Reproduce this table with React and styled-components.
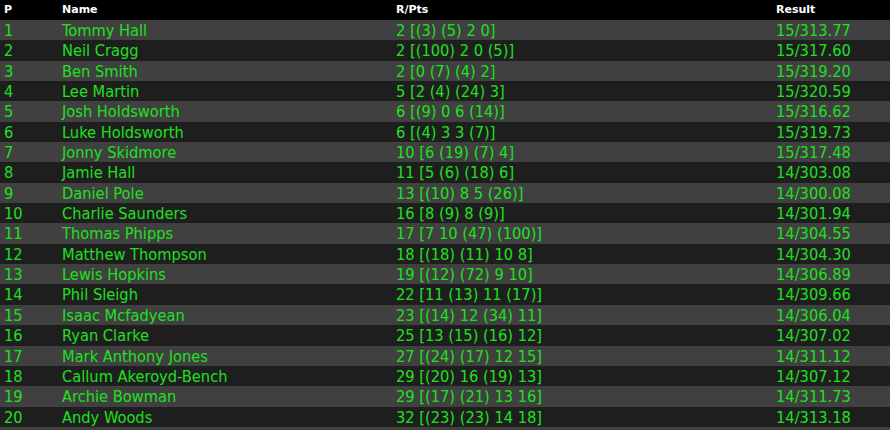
import React from "react";
import styled, { createGlobalStyle } from "styled-components";

const GlobalStyle = createGlobalStyle`
    body {
        margin: 0;
        background: #ffffff;
    }
`;

const Table = styled.div`
    width: 890px;
    display: grid;
    grid-template-columns: 58px 334px 380px 1fr;
    grid-auto-rows: 20.35px;
    grid-template-rows: 20px;
`;

const Row = styled.div`
    display: contents;
`;

const HeadCell = styled.div`
    background-color: #000000;
    color: #ffffff;
    font-family: "DejaVu Sans", sans-serif;
    font-weight: bold;
    font-size: 11px;
    line-height: 20px;
    padding-left: 4px;
    white-space: nowrap;
`;

const Cell = styled.div`
    background-color: ${(props) => (props.odd ? "#404040" : "#1e1e1e")};
    color: #1ee01e;
    font-family: "DejaVu Sans Condensed", "DejaVu Sans", sans-serif;
    font-size: 16.3px;
    line-height: 20.35px;
    padding: 1px 0 0 4px;
    box-sizing: border-box;
    white-space: nowrap;
    overflow: hidden;
`;

const results = [
    ["1", "Tommy Hall", "2 [(3) (5) 2 0]", "15/313.77"],
    ["2", "Neil Cragg", "2 [(100) 2 0 (5)]", "15/317.60"],
    ["3", "Ben Smith", "2 [0 (7) (4) 2]", "15/319.20"],
    ["4", "Lee Martin", "5 [2 (4) (24) 3]", "15/320.59"],
    ["5", "Josh Holdsworth", "6 [(9) 0 6 (14)]", "15/316.62"],
    ["6", "Luke Holdsworth", "6 [(4) 3 3 (7)]", "15/319.73"],
    ["7", "Jonny Skidmore", "10 [6 (19) (7) 4]", "15/317.48"],
    ["8", "Jamie Hall", "11 [5 (6) (18) 6]", "14/303.08"],
    ["9", "Daniel Pole", "13 [(10) 8 5 (26)]", "14/300.08"],
    ["10", "Charlie Saunders", "16 [8 (9) 8 (9)]", "14/301.94"],
    ["11", "Thomas Phipps", "17 [7 10 (47) (100)]", "14/304.55"],
    ["12", "Matthew Thompson", "18 [(18) (11) 10 8]", "14/304.30"],
    ["13", "Lewis Hopkins", "19 [(12) (72) 9 10]", "14/306.89"],
    ["14", "Phil Sleigh", "22 [11 (13) 11 (17)]", "14/309.66"],
    ["15", "Isaac Mcfadyean", "23 [(14) 12 (34) 11]", "14/306.04"],
    ["16", "Ryan Clarke", "25 [13 (15) (16) 12]", "14/307.02"],
    ["17", "Mark Anthony Jones", "27 [(24) (17) 12 15]", "14/311.12"],
    ["18", "Callum Akeroyd-Bench", "29 [(20) 16 (19) 13]", "14/307.12"],
    ["19", "Archie Bowman", "29 [(17) (21) 13 16]", "14/311.73"],
    ["20", "Andy Woods", "32 [(23) (23) 14 18]", "14/313.18"],
];

function App() {
    return (
        <>
            <GlobalStyle />
            <Table>
                <Row>
                    <HeadCell>P</HeadCell>
                    <HeadCell>Name</HeadCell>
                    <HeadCell>R/Pts</HeadCell>
                    <HeadCell>Result</HeadCell>
                </Row>
                {results.map((r, i) => (
                    <Row key={r[0]}>
                        {r.map((value, j) => (
                            <Cell key={j} odd={i % 2 === 0}>{value}</Cell>
                        ))}
                    </Row>
                ))}
                <Row>
                    <Cell odd />
                    <Cell odd />
                    <Cell odd />
                    <Cell odd />
                </Row>
            </Table>
        </>
    );
}

export default App;
